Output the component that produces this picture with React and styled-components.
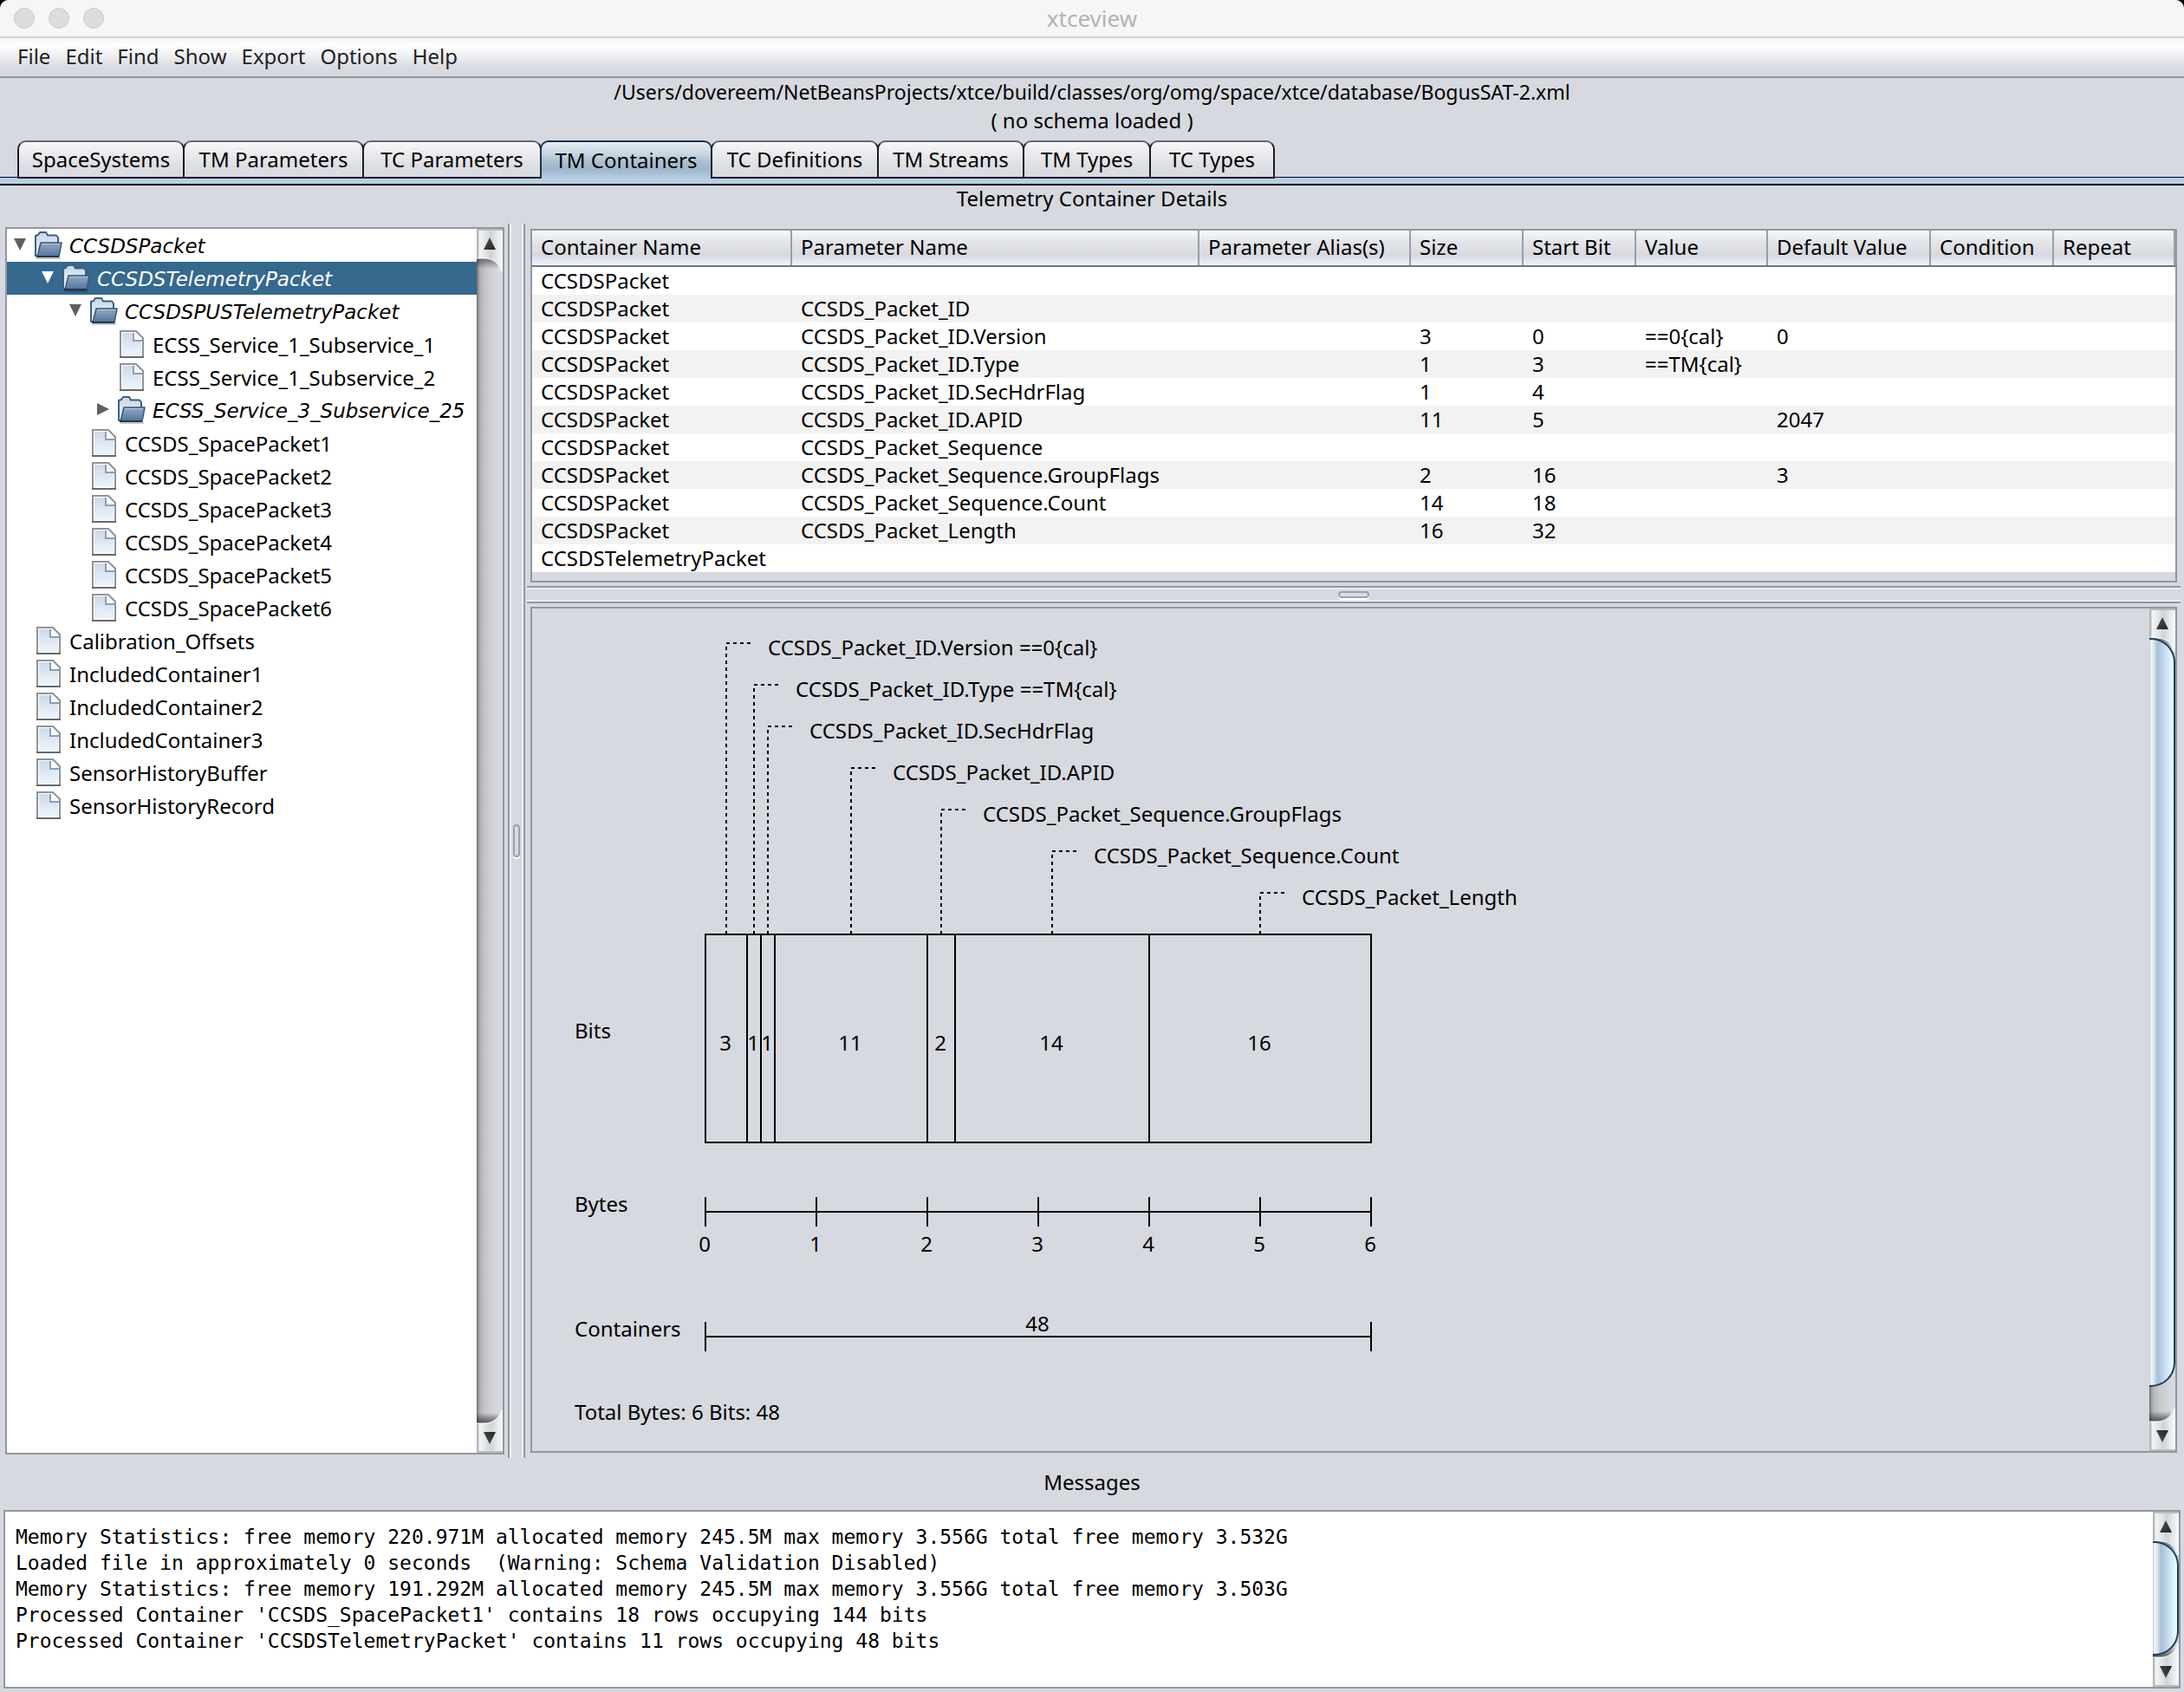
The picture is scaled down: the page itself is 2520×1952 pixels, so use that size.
import React, { useState } from "react";
import styled, { createGlobalStyle, css } from "styled-components";

const SANS = '"Noto Sans", "Open Sans", "DejaVu Sans", sans-serif';
const OBLIQUE = '"DejaVu Sans", "Noto Sans", sans-serif';
const MONO = '"DejaVu Sans Mono", "Liberation Mono", monospace';

const color = {
  panel: "#d6d9df",
  line: "#9297a1",
  select: "#36698d",
  stripe: "#f2f2f2",
};

const GlobalStyle = createGlobalStyle`
  *, *::before, *::after { box-sizing: border-box; }
  html { background: #000; }
  body { margin: 0; font: 24px/32px ${SANS}; color: #000; }
  button, textarea { font: inherit; color: inherit; margin: 0; padding: 0; border: 0; background: none; }
`;

const Window = styled.div`
  display: flex;
  flex-direction: column;
  min-height: 100vh;
  background: ${color.panel};
  border-radius: 10px 10px 0 0;
  overflow: hidden;
`;

/* ---------- title bar and menus ---------- */

const TitleBar = styled.header`
  display: grid;
  grid-template-columns: 1fr auto 1fr;
  align-items: center;
  height: 44px;
  padding: 0 16px;
  background: #f6f6f6;
  border-bottom: 2px solid #d1d4d1;
`;

const Lights = styled.div`
  display: flex;
  gap: 16px;
`;

const Light = styled.button`
  width: 24px;
  height: 24px;
  border-radius: 50%;
  background: #dcdcdc;
  border: 1px solid #cbcbcb;
`;

const WindowTitle = styled.h1`
  margin: 0;
  font-size: 26px;
  font-weight: 400;
  line-height: 42px;
  color: #b3b3b3;
`;

const MenuBar = styled.nav`
  display: flex;
  gap: 17px;
  height: 46px;
  padding: 0 20px;
  border-bottom: 2px solid ${color.line};
  background: linear-gradient(#f4f8f6, #fdfefe 20%, #eff0f3 45%, #d8dae0 78%, #d6d9df);
`;

const MenuItem = styled.button`
  line-height: 42px;
  height: 42px;
  color: #222;
`;

/* ---------- file heading and tabs ---------- */

const Heading = styled.div`
  display: flex;
  flex-direction: column;
  align-items: center;
`;

const FilePath = styled.div`
  font-size: 23px;
`;

const SchemaNote = styled.div`
  line-height: 34px;
`;

const TabRow = styled.div`
  display: flex;
  padding: 6px 20px 0;
`;

const Tab = styled.button`
  position: relative;
  width: ${(p) => p.$width}px;
  height: 44px;
  margin-right: -2px;
  margin-bottom: -2px;
  line-height: 40px;
  border: 2px solid #1b1b2b;
  border-top-color: #646672;
  border-radius: 10px 10px 0 0;
  background: linear-gradient(#f7f7f9, #e6e7eb 45%, #dcdee3 70%, #d7dae0);
  ${(p) =>
    p.$active &&
    css`
      border-color: #1d3048;
      border-bottom: 0;
      background: linear-gradient(#e6ecf0, #cbd8e2 30%, #a9bed1 55%, #9fb6cc 75%, #b6cde3);
    `}
`;

const TabStrip = styled.div`
  height: 10px;
  border-top: 1px solid #0a0a1c;
  border-bottom: 2px solid #04041a;
  background: #b8cfe5;
`;

const SectionTitle = styled.h2`
  margin: 0;
  padding-bottom: ${(p) => p.$after}px;
  font-size: 24px;
  font-weight: 400;
  line-height: ${(p) => p.$line}px;
  text-align: center;
`;

/* ---------- split panes ---------- */

const Split = styled.main`
  display: flex;
  flex: 1;
  min-height: 0;
`;

const LeftPane = styled.section`
  display: flex;
  flex: none;
  width: 586px;
  padding: 4px 4px 4px 6px;
`;

const RightPane = styled.div`
  display: flex;
  flex-direction: column;
  flex: 1;
  min-width: 0;
  padding: 6px 4px 6px 2px;
`;

const VerticalDivider = styled.div`
  display: flex;
  align-items: center;
  justify-content: center;
  width: 20px;
  border: solid ${color.line};
  border-width: 0 2px;
  box-shadow: inset 2px 0 #f0f0f2, inset -2px 0 #f0f0f2;
`;

const HorizontalDivider = styled.div`
  display: flex;
  align-items: center;
  justify-content: center;
  flex: none;
  height: 20px;
  margin: 4px 0;
  border: solid ${color.line};
  border-width: 2px 0;
  box-shadow: inset 0 2px #eceef0, inset 0 -2px #eceef0;
`;

const Grip = styled.span`
  width: ${(p) => (p.$wide ? 36 : 8)}px;
  height: ${(p) => (p.$wide ? 8 : 38)}px;
  border: 2px solid #9aa1ab;
  border-radius: 4px;
  background: #d9dce2;
  box-shadow: 0 2px #fff;
`;

const Framed = styled.div`
  display: flex;
  min-width: 0;
  min-height: 0;
  border: 2px solid ${color.line};
  background: ${(p) => (p.$white ? "#fff" : color.panel)};
`;

const TreeFrame = styled(Framed)`
  flex: 1;
`;

const TableFrame = styled(Framed)`
  flex: none;
  margin: 0 4px;
  padding-bottom: 10px;
`;

const DiagramFrame = styled(Framed)`
  flex: 1;
  margin: 0 4px;
`;

const DiagramArea = styled.div`
  flex: 1;
  min-width: 0;
  overflow: hidden;
`;

/* ---------- scroll bar ---------- */

const Bar = styled.div`
  display: flex;
  flex-direction: column;
  flex: none;
  width: 30px;
  background: linear-gradient(90deg, #66686b, #96989b 7%, #b2b3b6 14%, #c7c8cb 36%, #d0d1d5 60%, #d6d9e1 85%, #d6d9e1);
`;

const ArrowButton = styled.button`
  position: relative;
  z-index: 1;
  flex: none;
  width: 30px;
  height: 34px;
`;

const ArrowArt = styled.svg`
  position: absolute;
  left: 0;
  ${(p) => (p.$down ? "bottom: 0;" : "top: 0;")}
  display: block;
  pointer-events: none;
`;

const Track = styled.div`
  flex: 1;
  min-height: 0;
  background: linear-gradient(rgba(30, 30, 30, 0.55), rgba(60, 60, 60, 0) 12px),
    linear-gradient(0deg, rgba(30, 30, 30, 0.7), rgba(60, 60, 60, 0) 12px);
`;

const Thumb = styled.div`
  position: relative;
  z-index: 2;
  height: calc(100% - ${(p) => p.$rest}px);
  border: 2px solid #1f3d58;
  border-left: 0;
  border-radius: 0 28px 28px 0;
  background: linear-gradient(90deg, #b3c6da, #f5f8fb 7%, #e3ebf3 16%, #a8bfd4 34%, #b7cee5 50%, #c8dff3 66%, #e4ffff 96%);
`;

function ScrollArt({ down, id }) {
  return (
    <ArrowArt $down={down} width="30" height="50" viewBox="0 0 30 50" aria-hidden="true">
      <defs>
        <linearGradient id={id} x1="0" x2="1" y1="0" y2="0">
          <stop offset="0" stopColor="#b4b8bc" />
          <stop offset="0.06" stopColor="#b4b8bc" />
          <stop offset="0.1" stopColor="#f2f4f6" />
          <stop offset="0.3" stopColor="#e6e8ea" />
          <stop offset="0.55" stopColor="#d0d4d7" />
          <stop offset="0.8" stopColor="#e8ebee" />
          <stop offset="1" stopColor="#f5f9fc" />
        </linearGradient>
        <linearGradient id={id + "-arrow"} x1="0" x2="1" y1="0" y2="1">
          <stop offset="0" stopColor="#555" />
          <stop offset="1" stopColor="#222" />
        </linearGradient>
      </defs>
      <g transform={down ? "matrix(1 0 0 -1 0 50)" : undefined}>
        <path d="M0 0H30V50C26 40 20 34 9 34H0Z" fill={`url(#${id})`} />
        <path d="M0 34H9C20 34 26 40 29 50" fill="none" stroke="#fff" strokeOpacity="0.7" strokeWidth="1.5" />
        <path d="M0 1H30" stroke="#b9bcbc" strokeWidth="2" />
        <path d="M15 10L22 24H8Z" fill={`url(#${id}-arrow)`} />
      </g>
    </ArrowArt>
  );
}

function ScrollBar({ name, rest }) {
  return (
    <Bar>
      <ArrowButton type="button" aria-label={`Scroll ${name} up`}>
        <ScrollArt id={`${name}-up`} />
      </ArrowButton>
      <Track>{rest ? <Thumb $rest={rest} /> : null}</Track>
      <ArrowButton type="button" aria-label={`Scroll ${name} down`}>
        <ScrollArt down id={`${name}-down`} />
      </ArrowButton>
    </Bar>
  );
}

/* ---------- container tree ---------- */

const Tree = styled.ul`
  flex: 1;
  min-width: 0;
  margin: 0;
  padding: 0;
  list-style: none;
`;

const TreeRow = styled.li`
  display: flex;
  align-items: center;
  height: 38px;
  padding-left: ${(p) => 8 + p.$level * 32}px;
  color: ${(p) => (p.$selected ? "#fff" : "#000")};
  background: ${(p) => (p.$selected ? color.select : "transparent")};
  cursor: default;
`;

const Toggle = styled.span`
  display: flex;
  width: 24px;
  padding-bottom: 2px;
`;

const IconSlot = styled.span`
  display: flex;
  justify-content: center;
  width: 32px;
  margin-right: 8px;
`;

const TreeLabel = styled.span`
  padding-top: 2px;
  white-space: nowrap;
  ${(p) =>
    p.$abstract &&
    css`
      font-family: ${OBLIQUE};
      font-size: 23px;
      font-style: italic;
    `}
`;

function FolderIcon() {
  return (
    <svg width="32" height="34" viewBox="0 0 32 34" aria-hidden="true">
      <defs>
        <linearGradient id="folder-back" x1="0" x2="0" y1="0" y2="1">
          <stop offset="0" stopColor="#c9d7e8" />
          <stop offset="1" stopColor="#eef4fa" />
        </linearGradient>
        <linearGradient id="folder-front" x1="0" x2="0" y1="0" y2="1">
          <stop offset="0" stopColor="#93abc6" />
          <stop offset="0.5" stopColor="#7390b0" />
          <stop offset="1" stopColor="#547298" />
        </linearGradient>
      </defs>
      <path d="M2 32H30" stroke="#000" strokeOpacity="0.22" strokeWidth="2" />
      <path d="M1 29V6L4 5L6 2H13L15 5.500H25L27 8V29Z" fill="url(#folder-back)" stroke="#3f5f82" strokeWidth="2" strokeLinejoin="round" />
      <path d="M7 14H31L28 30H3Z" fill="url(#folder-front)" stroke="#3a5778" strokeWidth="1.500" strokeLinejoin="round" />
      <path d="M2 30H28" stroke="#22374f" strokeWidth="2" />
      <path d="M8 15.500H29" stroke="#b7c8da" strokeWidth="1" />
    </svg>
  );
}

function FileIcon() {
  return (
    <svg width="28" height="32" viewBox="0 0 28 32" aria-hidden="true">
      <defs>
        <linearGradient id="file-fill" x1="0" x2="0" y1="0" y2="1">
          <stop offset="0" stopColor="#cddaea" />
          <stop offset="1" stopColor="#eff4fa" />
        </linearGradient>
      </defs>
      <path d="M1 1H19L27 9V31H1Z" fill="#fff" stroke="#909298" strokeWidth="2" />
      <path d="M3 3H17V12H25V29H3Z" fill="url(#file-fill)" />
      <path d="M16 3V12H26" fill="none" stroke="#87a0ba" strokeWidth="2" />
      <path d="M18 3L25 10H18Z" fill="#f7fafc" />
      <path d="M0 31H28" stroke="#66686e" strokeWidth="2" />
    </svg>
  );
}

function ToggleArrow({ open, light }) {
  return (
    <svg width="14" height="14" viewBox="0 0 14 14" aria-hidden="true">
      <path d={open ? "M0 0H14L7 14Z" : "M0 0L14 7L0 14Z"} fill={light ? "#fff" : "#606060"} />
    </svg>
  );
}

const treeItems = [
  { name: "CCSDSPacket", level: 0, kind: "folder", open: true },
  { name: "CCSDSTelemetryPacket", level: 1, kind: "folder", open: true },
  { name: "CCSDSPUSTelemetryPacket", level: 2, kind: "folder", open: true },
  { name: "ECSS_Service_1_Subservice_1", level: 3 },
  { name: "ECSS_Service_1_Subservice_2", level: 3 },
  { name: "ECSS_Service_3_Subservice_25", level: 3, kind: "folder", open: false },
  { name: "CCSDS_SpacePacket1", level: 2 },
  { name: "CCSDS_SpacePacket2", level: 2 },
  { name: "CCSDS_SpacePacket3", level: 2 },
  { name: "CCSDS_SpacePacket4", level: 2 },
  { name: "CCSDS_SpacePacket5", level: 2 },
  { name: "CCSDS_SpacePacket6", level: 2 },
  { name: "Calibration_Offsets", level: 0 },
  { name: "IncludedContainer1", level: 0 },
  { name: "IncludedContainer2", level: 0 },
  { name: "IncludedContainer3", level: 0 },
  { name: "SensorHistoryBuffer", level: 0 },
  { name: "SensorHistoryRecord", level: 0 },
];

function ContainerTree() {
  const [selected, setSelected] = useState("CCSDSTelemetryPacket");
  return (
    <Tree role="tree" aria-label="Containers">
      {treeItems.map((item) => {
        const isFolder = item.kind === "folder";
        const isSelected = item.name === selected;
        return (
          <TreeRow
            key={item.name}
            role="treeitem"
            aria-level={item.level + 1}
            aria-selected={isSelected}
            aria-expanded={isFolder ? item.open : undefined}
            $level={item.level}
            $selected={isSelected}
            onClick={() => setSelected(item.name)}
          >
            <Toggle>{isFolder && <ToggleArrow open={item.open} light={isSelected} />}</Toggle>
            <IconSlot>{isFolder ? <FolderIcon /> : <FileIcon />}</IconSlot>
            <TreeLabel $abstract={isFolder}>{item.name}</TreeLabel>
          </TreeRow>
        );
      })}
    </Tree>
  );
}

/* ---------- parameter table ---------- */

const Table = styled.table`
  width: 100%;
  table-layout: fixed;
  border-collapse: separate;
  border-spacing: 0;
`;

const Col = styled.col`
  width: ${(p) => (p.$width ? `${p.$width}px` : "auto")};
`;

const HeadCell = styled.th`
  height: 42px;
  padding: 0 0 0 10px;
  font-weight: 400;
  line-height: 38px;
  text-align: left;
  vertical-align: top;
  white-space: nowrap;
  border-bottom: 2px solid #70747f;
  background: linear-gradient(90deg, #9a9ea7, #9a9ea7) right / 2px 100% no-repeat,
    linear-gradient(#f8f8fa, #e4e6ea 30%, #dcdee3 55%, #d6d9df 72%, #e6e9f2 88%, #f0f3fc);
`;

const Row = styled.tr`
  background: #fff;
  &:nth-child(even) {
    background: ${color.stripe};
  }
`;

const Cell = styled.td`
  height: 32px;
  padding: 0 0 0 10px;
  white-space: nowrap;
`;

const columns = [
  { name: "Container Name", width: 300 },
  { name: "Parameter Name", width: 470 },
  { name: "Parameter Alias(s)", width: 244 },
  { name: "Size", width: 130 },
  { name: "Start Bit", width: 130 },
  { name: "Value", width: 152 },
  { name: "Default Value", width: 188 },
  { name: "Condition", width: 142 },
  { name: "Repeat" },
];

const tableRows = [
  ["CCSDSPacket"],
  ["CCSDSPacket", "CCSDS_Packet_ID"],
  ["CCSDSPacket", "CCSDS_Packet_ID.Version", "", "3", "0", "==0{cal}", "0"],
  ["CCSDSPacket", "CCSDS_Packet_ID.Type", "", "1", "3", "==TM{cal}"],
  ["CCSDSPacket", "CCSDS_Packet_ID.SecHdrFlag", "", "1", "4"],
  ["CCSDSPacket", "CCSDS_Packet_ID.APID", "", "11", "5", "", "2047"],
  ["CCSDSPacket", "CCSDS_Packet_Sequence"],
  ["CCSDSPacket", "CCSDS_Packet_Sequence.GroupFlags", "", "2", "16", "", "3"],
  ["CCSDSPacket", "CCSDS_Packet_Sequence.Count", "", "14", "18"],
  ["CCSDSPacket", "CCSDS_Packet_Length", "", "16", "32"],
  ["CCSDSTelemetryPacket"],
];

function ParameterTable() {
  return (
    <Table>
      <colgroup>
        {columns.map((c) => (
          <Col key={c.name} $width={c.width} />
        ))}
      </colgroup>
      <thead>
        <tr>
          {columns.map((c) => (
            <HeadCell key={c.name} scope="col">
              {c.name}
            </HeadCell>
          ))}
        </tr>
      </thead>
      <tbody>
        {tableRows.map((row, r) => (
          <Row key={r}>
            {columns.map((c, i) => (
              <Cell key={c.name}>{row[i]}</Cell>
            ))}
          </Row>
        ))}
      </tbody>
    </Table>
  );
}

/* ---------- bit layout drawing ---------- */

const Chart = styled.svg`
  display: block;
  font: 24px ${SANS};
  shape-rendering: crispEdges;
`;

const fields = [
  { bits: 3, label: "CCSDS_Packet_ID.Version ==0{cal}" },
  { bits: 1, label: "CCSDS_Packet_ID.Type ==TM{cal}" },
  { bits: 1, label: "CCSDS_Packet_ID.SecHdrFlag" },
  { bits: 11, label: "CCSDS_Packet_ID.APID" },
  { bits: 2, label: "CCSDS_Packet_Sequence.GroupFlags" },
  { bits: 14, label: "CCSDS_Packet_Sequence.Count" },
  { bits: 16, label: "CCSDS_Packet_Length" },
];

const BIT = 16;
const LEFT = 200;
const BOX_TOP = 376;
const BOX_BOTTOM = 616;

function BitDiagram() {
  const total = fields.reduce((sum, f) => sum + f.bits, 0);
  const right = LEFT + total * BIT;
  let start = 0;
  const placed = fields.map((f, i) => {
    const x = LEFT + start * BIT;
    start += f.bits;
    return { ...f, x, mid: x + (f.bits * BIT) / 2, y: 40 + i * 48 };
  });
  const bytes = Array.from({ length: total / 8 + 1 }, (_, i) => i);
  return (
    <Chart width="1200" height="960" viewBox="0 0 1200 960" role="img" aria-label="Container bit layout">
      <g fill="none" stroke="#000" strokeWidth="2">
        {placed.map((f) => (
          <g key={f.label}>
            <path d={`M${f.mid} ${BOX_TOP}V${f.y}`} strokeDasharray="4 4" />
            <path d={`M${f.mid} ${f.y}H${f.mid + 28}`} strokeDasharray="4 4" />
            <path d={`M${f.x} ${BOX_TOP}V${BOX_BOTTOM}`} />
          </g>
        ))}
        <rect x={LEFT} y={BOX_TOP} width={right - LEFT} height={BOX_BOTTOM - BOX_TOP} />
        <path d={`M${LEFT} 696H${right}`} />
        {bytes.map((b) => (
          <path key={b} d={`M${LEFT + b * 8 * BIT} 679V713`} />
        ))}
        <path d={`M${LEFT} 840H${right}M${LEFT} 823V857M${right} 823V857`} />
      </g>
      {placed.map((f) => (
        <g key={f.label}>
          <text x={f.mid + 48} y={f.y + 14}>{f.label}</text>
          <text x={f.mid - 1} y="510" textAnchor="middle">{f.bits}</text>
        </g>
      ))}
      {bytes.map((b) => (
        <text key={b} x={LEFT + b * 8 * BIT - 1} y="742" textAnchor="middle">{b}</text>
      ))}
      <text x={(LEFT + right) / 2 - 1} y="834" textAnchor="middle">{total}</text>
      <text x="49" y="496">Bits</text>
      <text x="49" y="696">Bytes</text>
      <text x="49" y="840">Containers</text>
      <text x="49" y="936">{`Total Bytes: ${total / 8} Bits: ${total}`}</text>
    </Chart>
  );
}

/* ---------- messages ---------- */

const MessageFrame = styled(Framed)`
  flex: none;
  height: 206px;
  margin: 0 4px 4px;
`;

const MessageText = styled.textarea`
  flex: 1;
  min-width: 0;
  padding: 14px 12px;
  font: 23px/30px ${MONO};
  white-space: pre;
  overflow: hidden;
  resize: none;
  outline: none;
`;

const messages = [
  "Memory Statistics: free memory 220.971M allocated memory 245.5M max memory 3.556G total free memory 3.532G",
  "Loaded file in approximately 0 seconds  (Warning: Schema Validation Disabled)",
  "Memory Statistics: free memory 191.292M allocated memory 245.5M max memory 3.556G total free memory 3.503G",
  "Processed Container 'CCSDS_SpacePacket1' contains 18 rows occupying 144 bits",
  "Processed Container 'CCSDSTelemetryPacket' contains 11 rows occupying 48 bits",
].join("\n");

const menus = ["File", "Edit", "Find", "Show", "Export", "Options", "Help"];

const tabs = [
  { name: "SpaceSystems", width: 193 },
  { name: "TM Parameters", width: 209 },
  { name: "TC Parameters", width: 207 },
  { name: "TM Containers", width: 199 },
  { name: "TC Definitions", width: 194 },
  { name: "TM Streams", width: 170 },
  { name: "TM Types", width: 148 },
  { name: "TC Types", width: 145 },
];

export default function App() {
  const [active, setActive] = useState("TM Containers");
  return (
    <>
      <GlobalStyle />
      <Window>
        <TitleBar>
          <Lights>
            <Light type="button" aria-label="Close" />
            <Light type="button" aria-label="Minimize" />
            <Light type="button" aria-label="Zoom" />
          </Lights>
          <WindowTitle>xtceview</WindowTitle>
        </TitleBar>
        <MenuBar>
          {menus.map((m) => (
            <MenuItem key={m} type="button">
              {m}
            </MenuItem>
          ))}
        </MenuBar>
        <Heading>
          <FilePath>
            /Users/dovereem/NetBeansProjects/xtce/build/classes/org/omg/space/xtce/database/BogusSAT-2.xml
          </FilePath>
          <SchemaNote>( no schema loaded )</SchemaNote>
        </Heading>
        <TabRow role="tablist">
          {tabs.map((t) => (
            <Tab
              key={t.name}
              type="button"
              role="tab"
              aria-selected={t.name === active}
              $width={t.width}
              $active={t.name === active}
              onClick={() => setActive(t.name)}
            >
              {t.name}
            </Tab>
          ))}
        </TabRow>
        <TabStrip />
        <SectionTitle $line={30} $after={14}>
          Telemetry Container Details
        </SectionTitle>
        <Split>
          <LeftPane>
            <TreeFrame $white>
              <ContainerTree />
              <ScrollBar name="tree" />
            </TreeFrame>
          </LeftPane>
          <VerticalDivider>
            <Grip />
          </VerticalDivider>
          <RightPane>
            <TableFrame>
              <ParameterTable />
            </TableFrame>
            <HorizontalDivider>
              <Grip $wide />
            </HorizontalDivider>
            <DiagramFrame>
              <DiagramArea>
                <BitDiagram />
              </DiagramArea>
              <ScrollBar name="diagram" rest={40} />
            </DiagramFrame>
          </RightPane>
        </Split>
        <SectionTitle $line={56} $after={4}>
          <label htmlFor="messages">Messages</label>
        </SectionTitle>
        <MessageFrame $white>
          <MessageText id="messages" readOnly value={messages} />
          <ScrollBar name="messages" rest={2} />
        </MessageFrame>
      </Window>
    </>
  );
}
